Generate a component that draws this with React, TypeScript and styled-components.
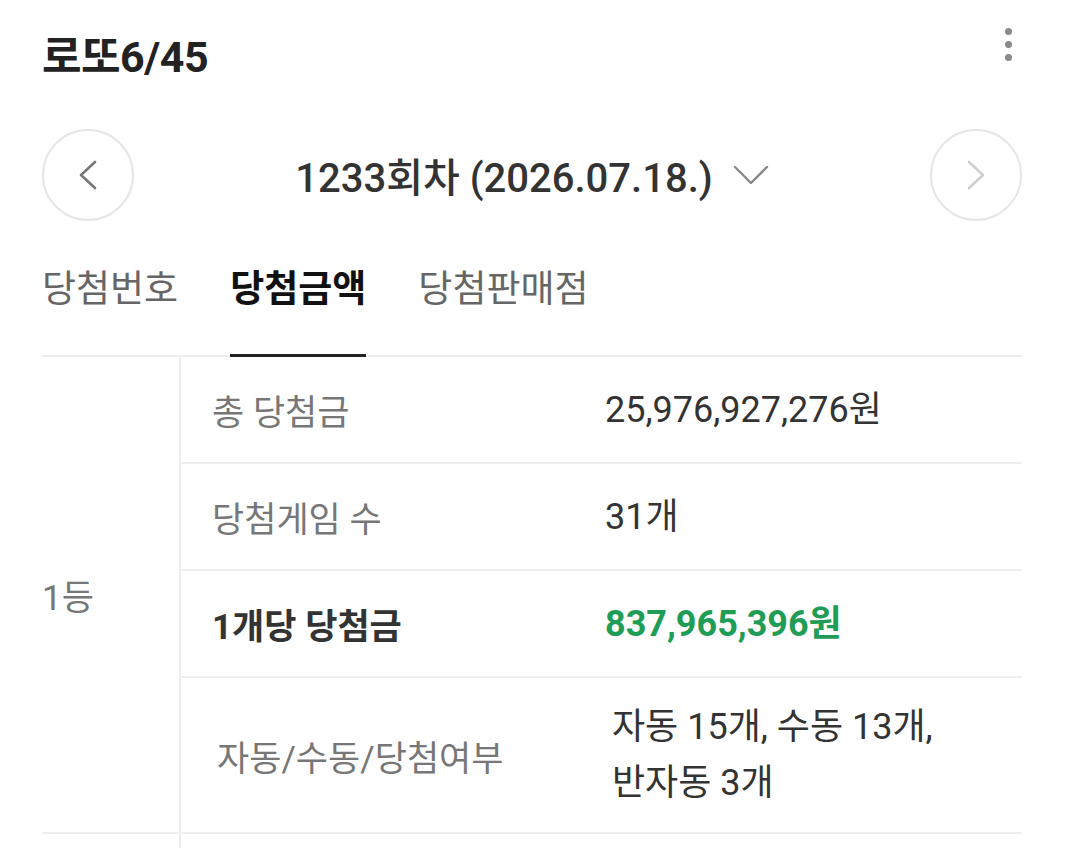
import React, { useState } from "react";
import styled, { createGlobalStyle } from "styled-components";

const GlobalStyle = createGlobalStyle`
  html, body {
    margin: 0;
    padding: 0;
    background: #ffffff;
  }
  body {
    font-family: Roboto, "Noto Sans CJK KR", sans-serif;
    color: #333333;
  }
`;

const Page = styled.div`
  width: 1080px;
  box-sizing: border-box;
  padding: 0 58px 0 42px;
`;

const TopBar = styled.div`
  height: 106px;
  display: flex;
  align-items: center;
  justify-content: space-between;
`;

const Title = styled.h1`
  margin: 0;
  font-size: 43px;
  font-weight: 700;
  color: #222222;
  letter-spacing: -0.5px;
`;

const Kebab = styled.button`
  border: none;
  background: none;
  padding: 0;
  margin: -18px 0 0 0;
  width: 28px;
  display: flex;
  flex-direction: column;
  align-items: center;
  gap: 6px;
  cursor: pointer;
`;

const Dot = styled.span`
  width: 7px;
  height: 7px;
  border-radius: 50%;
  background: #8a8a8a;
`;

const RoundNav = styled.div`
  margin-top: 21px;
  height: 95px;
  display: flex;
  align-items: center;
  justify-content: space-between;
`;

const CircleButton = styled.button<{ $disabled?: boolean }>`
  width: 92px;
  height: 92px;
  border-radius: 50%;
  border: 2px solid #e6e6e6;
  background: #ffffff;
  display: flex;
  align-items: center;
  justify-content: center;
  padding: 0;
  cursor: pointer;
  color: ${(p) => (p.$disabled ? "#cfcfcf" : "#777777")};
`;

const RoundPicker = styled.div`
  display: flex;
  align-items: center;
  gap: 20px;
  font-size: 40px;
  font-weight: 500;
  color: #333333;
`;

const TabBar = styled.div`
  margin-top: 34px;
  display: flex;
  gap: 52px;
  border-bottom: 2px solid #eeeeee;
`;

const Tab = styled.button<{ $active?: boolean }>`
  border: none;
  background: none;
  padding: 0 0 30px;
  margin-bottom: -2px;
  font-family: inherit;
  font-size: 37px;
  line-height: 68px;
  font-weight: ${(p) => (p.$active ? 700 : 400)};
  color: ${(p) => (p.$active ? "#111111" : "#666666")};
  border-bottom: 3px solid ${(p) => (p.$active ? "#222222" : "transparent")};
  cursor: pointer;
`;

const Group = styled.div<{ $open?: boolean }>`
  display: flex;
  border-bottom: ${(p) => (p.$open ? "none" : "2px solid #eeeeee")};
  min-height: ${(p) => (p.$open ? "40px" : "0")};
`;

const RankCell = styled.div`
  width: 137px;
  flex-shrink: 0;
  border-right: 2px solid #eeeeee;
  display: flex;
  align-items: center;
  font-size: 35px;
  color: #777777;
`;

const Rows = styled.div`
  flex: 1;
  display: flex;
  flex-direction: column;
`;

const Row = styled.div`
  display: grid;
  grid-template-columns: 392px 1fr;
  min-height: 105px;
  & + & {
    border-top: 2px solid #eeeeee;
  }
`;

const Label = styled.div<{ $strong?: boolean; $indent?: number }>`
  display: flex;
  align-items: center;
  padding-left: ${(p) => 31 + (p.$indent || 0)}px;
  font-size: 35px;
  font-weight: ${(p) => (p.$strong ? 700 : 400)};
  color: ${(p) => (p.$strong ? "#333333" : "#777777")};
`;

const Value = styled.div<{ $highlight?: boolean; $indent?: number }>`
  display: flex;
  align-items: center;
  padding: 21px 20px 21px ${(p) => 32 + (p.$indent || 0)}px;
  font-size: 36px;
  line-height: 56px;
  font-weight: ${(p) => (p.$highlight ? 700 : 400)};
  color: ${(p) => (p.$highlight ? "#1f9d57" : "#333333")};
`;

type Item = {
  label: string;
  value: React.ReactNode;
  strong?: boolean;
  labelIndent?: number;
  valueIndent?: number;
};

const prizes: { rank: string; items: Item[] }[] = [
  {
    rank: "1등",
    items: [
      { label: "총 당첨금", value: "25,976,927,276원" },
      { label: "당첨게임 수", value: "31개" },
      { label: "1개당 당첨금", value: "837,965,396원", strong: true },
      {
        label: "자동/수동/당첨여부",
        value: (
          <span>
            자동 15개, 수동 13개,
            <br />
            반자동 3개
          </span>
        ),
        labelIndent: 5,
        valueIndent: 7,
      },
    ],
  },
];

const tabs = ["당첨번호", "당첨금액", "당첨판매점"];

function Chevron({ dir }: { dir: "left" | "right" }) {
  const points = dir === "left" ? "16,2 2,15 16,28" : "2,2 16,15 2,28";
  return (
    <svg width="18" height="30" viewBox="0 0 18 30" fill="none">
      <polyline points={points} stroke="currentColor" strokeWidth="2.6" strokeLinecap="round" strokeLinejoin="round" />
    </svg>
  );
}

function App() {
  const [activeTab, setActiveTab] = useState(1);

  return (
    <Page>
      <GlobalStyle />
      <TopBar>
        <Title>로또6/45</Title>
        <Kebab aria-label="menu">
          <Dot />
          <Dot />
          <Dot />
        </Kebab>
      </TopBar>

      <RoundNav>
        <CircleButton aria-label="prev">
          <Chevron dir="left" />
        </CircleButton>
        <RoundPicker>
          <span>1233회차 (2026.07.18.)</span>
          <svg width="36" height="22" viewBox="0 0 36 22" fill="none">
            <polyline points="2,3 18,19 34,3" stroke="#888888" strokeWidth="2.4" strokeLinecap="round" strokeLinejoin="round" />
          </svg>
        </RoundPicker>
        <CircleButton $disabled aria-label="next">
          <Chevron dir="right" />
        </CircleButton>
      </RoundNav>

      <TabBar>
        {tabs.map((t, i) => (
          <Tab key={t} $active={i === activeTab} onClick={() => setActiveTab(i)}>
            {t}
          </Tab>
        ))}
      </TabBar>

      {prizes.map((p) => (
        <Group key={p.rank}>
          <RankCell>{p.rank}</RankCell>
          <Rows>
            {p.items.map((it) => (
              <Row key={it.label}>
                <Label $strong={it.strong} $indent={it.labelIndent}>
                  {it.label}
                </Label>
                <Value $highlight={it.strong} $indent={it.valueIndent}>
                  {it.value}
                </Value>
              </Row>
            ))}
          </Rows>
        </Group>
      ))}
      {/* top edge of the next rank group, scrolled below the fold */}
      <Group $open>
        <RankCell />
      </Group>
    </Page>
  );
}

export default App;
